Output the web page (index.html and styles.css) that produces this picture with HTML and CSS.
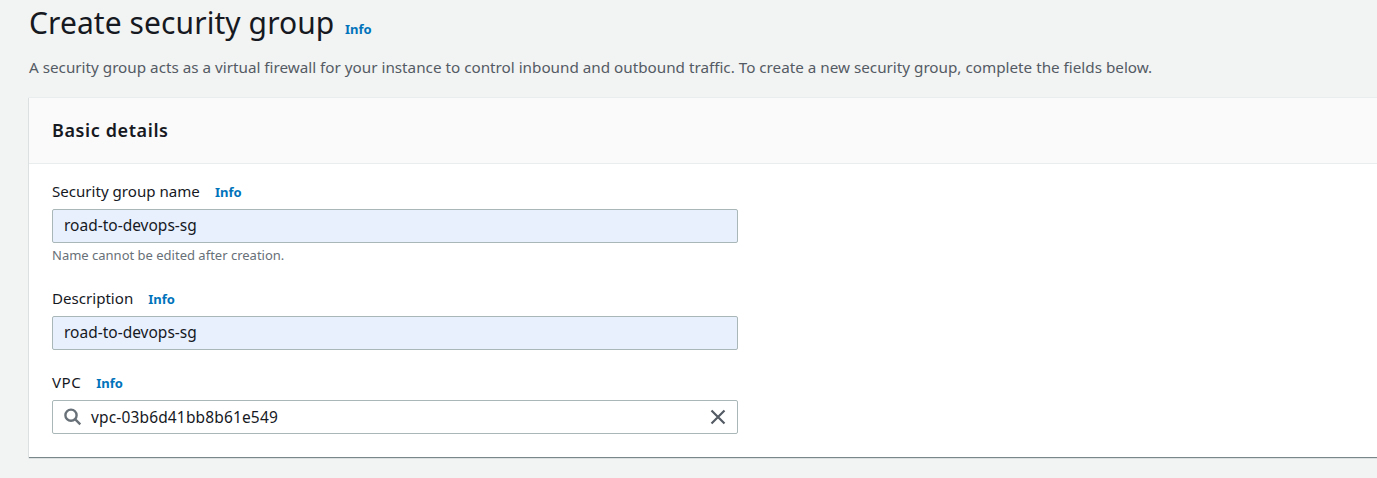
FILE: index.html
```html
<!DOCTYPE html>
<html lang="en">
<head>
<meta charset="utf-8">
<title>Create security group</title>
<link rel="stylesheet" href="styles.css">
</head>
<body>
<main class="page">
  <header class="page-header">
    <h1 class="title">Create security group</h1>
    <a class="info">Info</a>
  </header>
  <p class="intro">A security group acts as a virtual firewall for your instance to control inbound and outbound traffic. To create a new security group, complete the fields below.</p>
  <section class="panel">
    <div class="panel-header"><h2 class="panel-title">Basic details</h2></div>
    <div class="panel-body">
      <div class="field field-name">
        <div class="label-row"><span class="label">Security group name</span><a class="info">Info</a></div>
        <div class="input filled"><span class="value">road-to-devops-sg</span></div>
        <div class="hint">Name cannot be edited after creation.</div>
      </div>
      <div class="field field-description">
        <div class="label-row"><span class="label">Description</span><a class="info">Info</a></div>
        <div class="input filled"><span class="value">road-to-devops-sg</span></div>
      </div>
      <div class="field">
        <div class="label-row"><span class="label label-vpc">VPC</span><a class="info">Info</a></div>
        <div class="input search">
          <svg class="icon-search" width="18" height="18" viewBox="0 0 18 18"><circle cx="7" cy="7.2" r="5.6"/><path d="M11 11.2L16.3 16.3"/></svg>
          <span class="value vpc-value">vpc-03b6d41bb8b61e549</span>
          <svg class="icon-close" width="16" height="16" viewBox="0 0 16 16"><path d="M1.5 1.5l13 13M14.5 1.5l-13 13"/></svg>
        </div>
      </div>
    </div>
  </section>
</main>
</body>
</html>
```
FILE: styles.css
```css
* { box-sizing: border-box; }
body { margin: 0; background: #f2f3f3; overflow: hidden; font-family: "Noto Sans", sans-serif; color: #16191f; }
.page { height: 478px; padding-left: 29px; }
.page-header { display: flex; height: 48px; align-items: baseline; padding-top: 2px; }
.title { margin: 0; width: 316px; font-size: 30px; line-height: 42px; font-weight: 400; letter-spacing: .08px; white-space: nowrap; }
.info { color: #0073bb; font-size: 13px; font-weight: 700; line-height: 20px; }
.intro { margin: 0; height: 49px; padding-top: 8px; font-size: 15.245px; line-height: 22px; color: #545b64; white-space: nowrap; }
.panel { height: 360px; background: #fff; border-top: 1px solid #eaeded; box-shadow: 0 1px 1px rgba(0,28,36,.5); }
.panel-header { height: 66px; padding: 18px 23px; background: #fafafa; border-bottom: 1px solid #eaeded; }
.panel-title { margin: 0; font-size: 18px; line-height: 28px; font-weight: 600; letter-spacing: .6px; }
.panel-body { padding: 16px 23px; }
.field { width: 686px; }
.label-row { display: flex; align-items: baseline; gap: 15px; height: 29px; line-height: 22px; }
.label { font-size: 15.1px; white-space: nowrap; }
.label-vpc { letter-spacing: .5px; }
.input { display: flex; align-items: center; height: 34px; padding: 0 11px; border: 1px solid #aab7b8; border-radius: 2px; background: #fff; font-size: 15.5px; line-height: 22px; }
.filled .value { padding-bottom: 2px; }
.filled { background: #e8f0fe; }
.vpc-value { letter-spacing: .15px; }
.hint { height: 22px; padding-top: 2px; font-size: 13px; line-height: 20px; color: #687078; }
.field-name { height: 107px; }
.field-description { height: 84px; }
.icon-search { margin-right: 9px; fill: none; stroke: #687078; stroke-width: 2.4; }
.icon-close { margin-left: auto; fill: none; stroke: #545b64; stroke-width: 2.2; }
```
